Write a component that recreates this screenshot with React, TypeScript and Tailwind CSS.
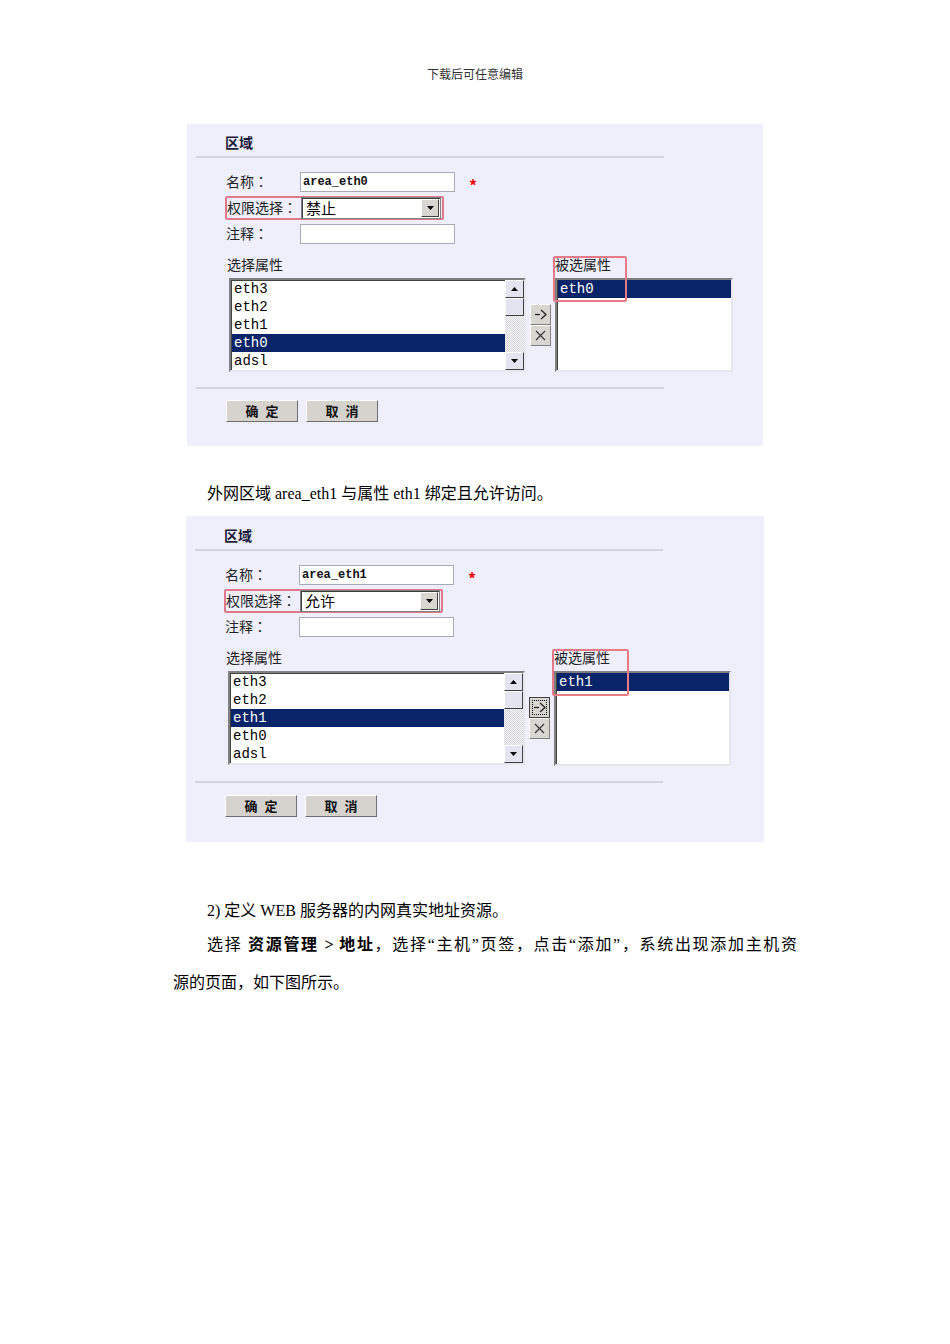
import React from "react";

const cjk = "font-['Noto_Sans_CJK_SC',sans-serif]";
const mono = "font-['Liberation_Mono',monospace]";

function Colon() {
  return <span className="font-['Noto_Sans_CJK_TC',sans-serif]">：</span>;
}

function TriUp() {
  return (
    <svg width="7" height="4" viewBox="0 0 7 4">
      <path d="M0 4 L3.5 0 L7 4 Z" fill="#000" />
    </svg>
  );
}
function TriDown() {
  return (
    <svg width="7" height="4" viewBox="0 0 7 4">
      <path d="M0 0 L3.5 4 L7 0 Z" fill="#000" />
    </svg>
  );
}

function ScrollBar() {
  return (
    <div className="w-[19px] h-[90px] flex flex-col">
      <div className="h-[18px] bg-[#e4e4f0] border border-t-white border-l-white border-b-[#404040] border-r-[#404040] flex items-center justify-center">
        <TriUp />
      </div>
      <div className="h-[18px] bg-[#e4e4f0] border border-t-white border-l-white border-b-[#404040] border-r-[#404040]" />
      <div className="flex-1 bg-[repeating-conic-gradient(#d8d8dc_0%_25%,#f6f6f8_0%_50%)] bg-[length:2px_2px]" />
      <div className="h-[18px] bg-[#e4e4f0] border border-t-white border-l-white border-b-[#404040] border-r-[#404040] flex items-center justify-center">
        <TriDown />
      </div>
    </div>
  );
}

function Panel({
  name,
  perm,
  sel,
  focusArrow,
  tall,
}: {
  name: string;
  perm: string;
  sel: string;
  focusArrow: boolean;
  tall: boolean;
}) {
  const items = ["eth3", "eth2", "eth1", "eth0", "adsl"];
  return (
    <div
      className={
        tall
          ? "ml-[186px] w-[578px] h-[326px] pt-[11px] bg-[#efeffb] text-[#222] " + cjk
          : "ml-[187px] w-[576px] h-[322px] pt-[10px] bg-[#efeffb] text-[#222] " + cjk
      }
    >
      <div className="pl-[38px] h-4 leading-4 text-[14px] font-bold text-[#1a1a3a]">区域</div>
      <div className="ml-[9px] mt-[6px] w-[468px] h-[2px] bg-[#d4d4de]" />

      <div className="mt-[14px] h-5 flex items-center pl-[39px] text-[14px]">
        <span className="w-[74px] leading-5 -mt-[2px]">
          名称<Colon />
        </span>
        <div className="w-[155px] h-5 bg-white border border-[#a8a8b8] flex items-center pl-[2px]">
          <span className={"text-[12px] font-bold text-[#111] " + mono}>{name}</span>
        </div>
        <span className="ml-[14px] mt-[6px] text-[16px] leading-none text-[#ff0000] font-bold">*</span>
      </div>

      <div className="mt-1 ml-[38px] w-[219px] h-6 border-2 border-[#e07a88] rounded-[2px] flex items-center text-[14px]">
        <span className="w-[74px] leading-5 -mt-[2px]">
          权限选择<Colon />
        </span>
        <div className="w-[140px] h-[22px] bg-white border border-[#808080] shadow-[inset_1px_1px_0_#404040] flex items-center justify-between">
          <span className="pl-[4px] text-[15px] leading-5 text-black">{perm}</span>
          <div className="mr-[1px] w-[18px] h-[18px] bg-[#d8d6d0] border border-t-white border-l-white border-b-[#404040] border-r-[#404040] flex items-center justify-center">
            <TriDown />
          </div>
        </div>
      </div>

      <div className="mt-1 h-5 flex items-center pl-[39px] text-[14px]">
        <span className="w-[74px] leading-5 -mt-[2px]">
          注释<Colon />
        </span>
        <div className="w-[155px] h-5 bg-white border border-[#a8a8b8]" />
      </div>

      <div className="mt-[13px] flex pl-[42px]">
        <div className="flex flex-col">
          <div className="h-[22px] leading-4 text-[14px] -ml-[2px] -mt-[1px]">选择属性</div>
          <div className="w-[297px] h-[94px] bg-white border-2 border-t-[#808080] border-l-[#808080] border-b-[#e6e6ee] border-r-[#e6e6ee] shadow-[inset_1px_1px_0_#404040] flex">
            <div className="flex-1 flex flex-col pl-[1px]">
              {items.map((it) => (
                <div
                  key={it}
                  className={
                    it === sel
                      ? "h-[18px] leading-[18px] pl-[2px] text-[14px] bg-[#0a246a] text-white " + mono
                      : "h-[18px] leading-[18px] pl-[2px] text-[14px] text-black " + mono
                  }
                >
                  {it}
                </div>
              ))}
            </div>
            <div>
              <ScrollBar />
            </div>
          </div>
        </div>

        <div className="ml-[4px] mt-[47px] flex flex-col">
          <div
            className={
              focusArrow
                ? "w-[21px] h-[21px] bg-[#d8d6d0] border border-[#404040] flex items-center justify-center"
                : "w-[21px] h-[21px] bg-[#d8d6d0] border border-t-white border-l-white border-b-[#808080] border-r-[#808080] flex items-center justify-center"
            }
          >
            <div
              className={
                focusArrow
                  ? "w-[15px] h-[15px] border border-dotted border-black flex items-center justify-center"
                  : "w-[15px] h-[15px] flex items-center justify-center"
              }
            >
              <svg width="13" height="11" viewBox="0 0 13 11">
                <path d="M1 5.5 H6" stroke="#222" strokeWidth="1.3" />
                <path d="M7 1 L12 5.5 L7 10" stroke="#222" strokeWidth="1.3" fill="none" />
              </svg>
            </div>
          </div>
          <div className="w-[21px] h-[21px] bg-[#d8d6d0] border border-t-white border-l-white border-b-[#808080] border-r-[#808080] flex items-center justify-center">
            <svg width="11" height="11" viewBox="0 0 11 11">
              <path d="M1 1 L10 10 M10 1 L1 10" stroke="#333" strokeWidth="1.1" />
            </svg>
          </div>
        </div>

        <div className="ml-[4px] flex flex-col relative">
          <div className="h-[22px] leading-4 text-[14px] -mt-[1px]">被选属性</div>
          <div
            className={
              tall
                ? "w-[177px] h-[95px] bg-white border-2 border-t-[#808080] border-l-[#808080] border-b-[#e6e6ee] border-r-[#e6e6ee] shadow-[inset_1px_1px_0_#404040] pl-[1px]"
                : "w-[178px] h-[94px] bg-white border-2 border-t-[#808080] border-l-[#808080] border-b-[#e6e6ee] border-r-[#e6e6ee] shadow-[inset_1px_1px_0_#404040] pl-[1px]"
            }
          >
            <div className={"h-[18px] leading-[18px] pl-[2px] text-[14px] bg-[#0a246a] text-white " + mono}>{sel}</div>
          </div>
          <div
            className={
              tall
                ? "absolute -left-[2px] -top-[1px] w-[77px] h-[47px] border-2 border-[#e87a88] rounded-[2px]"
                : "absolute -left-[2px] -top-[1px] w-[74px] h-[46px] border-2 border-[#e87a88] rounded-[2px]"
            }
          />
        </div>
      </div>

      <div className="ml-[9px] mt-[15px] w-[468px] h-[2px] bg-[#d4d4de]" />

      <div className={tall ? "mt-[12px] pl-[39px] flex gap-2" : "mt-[11px] pl-[39px] flex gap-2"}>
        <div className="w-[72px] h-[22px] bg-[#d6d3ce] border border-t-white border-l-white border-b-[#6e6e6e] border-r-[#6e6e6e] flex items-center justify-center text-[13px] font-bold text-[#111] tracking-[7px] pl-[7px]">
          确定
        </div>
        <div className="w-[72px] h-[22px] bg-[#d6d3ce] border border-t-white border-l-white border-b-[#6e6e6e] border-r-[#6e6e6e] flex items-center justify-center text-[13px] font-bold text-[#111] tracking-[7px] pl-[7px]">
          取消
        </div>
      </div>
    </div>
  );
}

export default function App() {
  const serif = "font-['Liberation_Serif','Noto_Sans_CJK_SC',serif]";
  return (
    <div className={"w-[950px] min-h-[1344px] bg-white text-black pt-[66px] " + serif}>
      <div className={"h-4 leading-4 text-center text-[12px] text-[#333] " + cjk}>下载后可任意编辑</div>

      <div className="mt-[42px]">
        <Panel name="area_eth0" perm="禁止" sel="eth0" focusArrow={false} tall={false} />
      </div>

      <p className="mt-[38px] pl-[207px] text-[16px] leading-5">外网区域 area_eth1 与属性 eth1 绑定且允许访问。</p>

      <div className="mt-[12px]">
        <Panel name="area_eth1" perm="允许" sel="eth1" focusArrow={true} tall={true} />
      </div>

      <p className="mt-[59px] pl-[207px] text-[16px] leading-5">2) 定义 WEB 服务器的内网真实地址资源。</p>
      <p className="mt-[14px] ml-[207px] w-[590px] text-[16px] leading-5 text-justify [text-align-last:justify]">
        选择 <b>资源管理 &gt; 地址</b>，选择“主机”页签，点击“添加”，系统出现添加主机资
      </p>
      <p className="mt-[18px] ml-[173px] text-[16px] leading-5">源的页面，如下图所示。</p>
    </div>
  );
}
